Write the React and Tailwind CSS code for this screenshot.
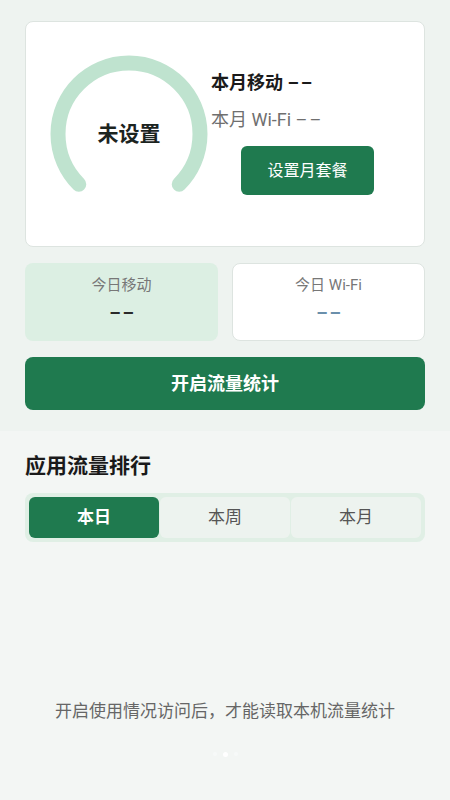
import { useState } from 'react';

const fuente = { fontFamily: 'Roboto, "Noto Sans CJK SC", "Noto Sans", sans-serif' };

function Guiones({ className = '' }) {
  return <span className={`tracking-[2px] ${className}`}>––</span>;
}

function Medidor() {
  // arco de 270°, abierto abajo
  const r = 71;
  const cx = 79;
  const cy = 79;
  const a0 = (135 * Math.PI) / 180;
  const a1 = (405 * Math.PI) / 180;
  const x0 = cx + r * Math.cos(a0);
  const y0 = cy + r * Math.sin(a0);
  const x1 = cx + r * Math.cos(a1);
  const y1 = cy + r * Math.sin(a1);
  return (
    <div className="relative w-[158px] h-[158px] shrink-0">
      <svg width="158" height="158" viewBox="0 0 158 158">
        <path
          d={`M ${x0} ${y0} A ${r} ${r} 0 1 1 ${x1} ${y1}`}
          fill="none"
          stroke="#bfe3cf"
          strokeWidth="15"
          strokeLinecap="round"
        />
      </svg>
      <div className="absolute inset-0 flex items-center justify-center pt-[2px]">
        <span className="text-[21px] font-bold text-[#1c241f]">未设置</span>
      </div>
    </div>
  );
}

export default function App() {
  const [tab, setTab] = useState('dia');
  const tabs = [
    { id: 'dia', label: '本日' },
    { id: 'semana', label: '本周' },
    { id: 'mes', label: '本月' },
  ];

  return (
    <div className="w-[450px] h-[800px] flex flex-col bg-[#f3f6f4] overflow-hidden" style={fuente}>
      <div className="bg-[#eef3f0] px-[25px] pt-[21px] pb-[21px]">
        <div className="h-[226px] bg-white border border-[#dde4e0] rounded-lg flex items-center pl-[24px]">
          <Medidor />
          <div className="flex flex-col ml-[3px] -mt-[2px]">
            <p className="text-[18px] font-bold text-[#1a1a1a] leading-[24px]">本月移动 <Guiones /></p>
            <p className="text-[18px] text-[#6f6f6f] leading-[24px] mt-[13px]">本月 Wi-Fi <Guiones /></p>
            <button className="ml-[30px] mt-[14px] w-[133px] h-[49px] rounded-md bg-[#1f7a4f] text-white text-[16px]">
              设置月套餐
            </button>
          </div>
        </div>

        <div className="grid grid-cols-2 gap-[14px] mt-[16px]">
          <div className="h-[78px] rounded-lg bg-[#dcefe3] flex flex-col items-center pt-[12px]">
            <span className="text-[15px] text-[#777] leading-[20px]">今日移动</span>
            <span className="text-[18px] font-bold text-[#2a2a2a] leading-[20px] mt-[8px] pl-[2px]"><Guiones /></span>
          </div>
          <div className="h-[78px] rounded-lg bg-white border border-[#dde4e0] flex flex-col items-center pt-[11px]">
            <span className="text-[15px] text-[#777] leading-[20px]">今日 Wi-Fi</span>
            <span className="text-[18px] font-bold text-[#6a8fab] leading-[20px] mt-[8px] pl-[2px]"><Guiones /></span>
          </div>
        </div>

        <button className="mt-[16px] w-full h-[53px] rounded-lg bg-[#1f7a4f] text-white text-[18px] font-bold">
          开启流量统计
        </button>
      </div>

      <div className="px-[25px] pt-[21px] flex-1 flex flex-col">
        <h2 className="text-[21px] font-bold text-[#1a1a1a] leading-[28px]">应用流量排行</h2>
        <div className="mt-[13px] h-[49px] rounded-lg bg-[#e0efe5] p-[4px] flex gap-[1px]">
          {tabs.map(t => (
            <button
              key={t.id}
              onClick={() => setTab(t.id)}
              className={
                tab === t.id
                  ? 'flex-1 rounded-md bg-[#1f7a4f] text-white text-[17px] font-bold'
                  : 'flex-1 rounded-md bg-[#edf3ef] text-[#555] text-[17px]'
              }
            >
              {t.label}
            </button>
          ))}
        </div>

        <p className="mt-[157px] text-center text-[17px] text-[#666] leading-[24px]">
          开启使用情况访问后，才能读取本机流量统计
        </p>
        <div className="flex justify-center gap-[6px] mt-[29px]">
          <span className="w-[4px] h-[4px] rounded-full bg-[#f7f9f8]" />
          <span className="w-[5px] h-[5px] rounded-full bg-white" />
          <span className="w-[4px] h-[4px] rounded-full bg-[#f7f9f8]" />
        </div>
      </div>
    </div>
  );
}
